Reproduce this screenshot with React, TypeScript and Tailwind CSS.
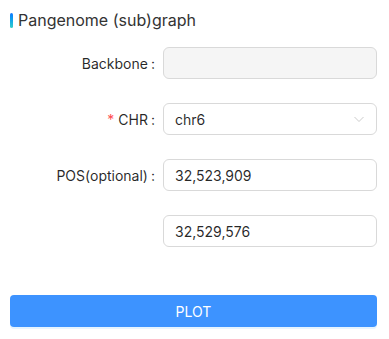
export default function App() {
  const font = { fontFamily: "Inter, 'Noto Sans', sans-serif" };
  return (
    <div className="w-[389px] h-[339px] bg-white text-[14px] text-[#000000d9]" style={font}>
      {/* Title */}
      <div className="flex items-center pt-[10px] pl-[10px] h-[30px]">
        <span className="w-[3px] h-[15px] rounded-[2px] bg-gradient-to-b from-[#1677ff] to-[#36cfc9] mr-[5px]" />
        <span className="text-[16px] text-[#333] leading-[20px]">Pangenome (sub)graph</span>
      </div>

      <div className="pt-[17px] pr-[12px]">
        {/* Backbone */}
        <div className="flex items-center h-[32px] mb-[24px]">
          <div className="w-[163px] flex justify-end pr-[8px]">Backbone<span className="ml-[3px]">:</span></div>
          <div className="flex-1 h-[32px] rounded-[6px] border border-[#d9d9d9] bg-[#f5f5f5]" />
        </div>

        {/* CHR */}
        <div className="flex items-center h-[32px] mb-[24px]">
          <div className="w-[163px] flex justify-end pr-[8px]">
            <span className="text-[#ff4d4f] mr-[4px]">*</span>CHR<span className="ml-[3px]">:</span>
          </div>
          <div className="flex-1 h-[32px] rounded-[6px] border border-[#d9d9d9] flex items-center px-[11px]">
            <span className="flex-1">chr6</span>
            <svg width="12" height="12" viewBox="0 0 12 12" fill="none" stroke="#c4c4c4" strokeWidth="0.9">
              <path d="M1.5 4l4.5 4.5L10.5 4" />
            </svg>
          </div>
        </div>

        {/* POS */}
        <div className="flex items-center h-[32px] mb-[24px]">
          <div className="w-[163px] flex justify-end pr-[8px]">POS(optional)<span className="ml-[3px]">:</span></div>
          <div className="flex-1 h-[32px] rounded-[6px] border border-[#d9d9d9] flex items-center px-[11px]">32,523,909</div>
        </div>

        <div className="flex items-center h-[32px]">
          <div className="w-[163px]" />
          <div className="flex-1 h-[32px] rounded-[6px] border border-[#d9d9d9] flex items-center px-[11px]">32,529,576</div>
        </div>
      </div>

      <div className="px-[10px] pt-[48px] pr-[12px]">
        <button className="w-full h-[32px] rounded-[4px] bg-[#3d93ff] text-white text-[14px] flex items-center justify-center shadow-[0_2px_0_rgba(5,145,255,0.1)]">
          PLOT
        </button>
      </div>
    </div>
  );
}
